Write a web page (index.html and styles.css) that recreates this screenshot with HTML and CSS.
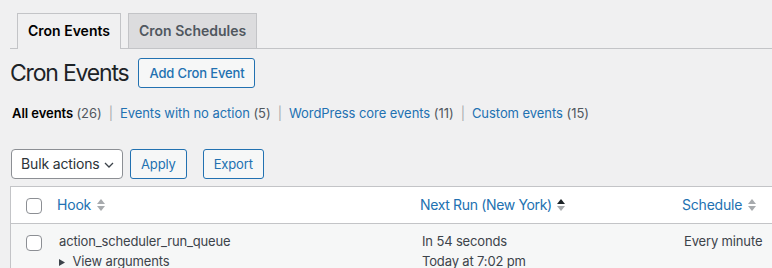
FILE: index.html
```html
<!DOCTYPE html>
<html lang="en">
<head>
<meta charset="utf-8">
<title>Cron Events</title>
<link rel="stylesheet" href="styles.css">
</head>
<body>
<div class="wrap">
  <nav class="tabs">
    <a class="tab active" href="#">Cron Events</a>
    <a class="tab" href="#">Cron Schedules</a>
  </nav>
  <div class="title-row">
    <h1>Cron Events</h1>
    <a class="btn title-btn" href="#">Add Cron Event</a>
  </div>
  <ul class="subsubsub">
    <li><a class="current" href="#">All events <span class="count">(26)</span></a><span class="sep">|</span></li>
    <li><a href="#">Events with no action <span class="count">(5)</span></a><span class="sep">|</span></li>
    <li><a href="#">WordPress core events <span class="count">(11)</span></a><span class="sep">|</span></li>
    <li><a href="#">Custom events <span class="count">(15)</span></a></li>
  </ul>
  <div class="tablenav">
    <div class="select">Bulk actions
      <svg class="chev" width="10" height="6" viewBox="0 0 10 6"><path d="M1 1l4 4 4-4" fill="none" stroke="#3c434a" stroke-width="1.3"/></svg>
    </div>
    <a class="btn" href="#">Apply</a>
    <a class="btn export" href="#">Export</a>
  </div>
  <table class="list">
    <colgroup>
      <col class="c-check"><col class="c-hook"><col class="c-next"><col class="c-sched">
    </colgroup>
    <thead>
      <tr>
        <th class="check"><span class="cb"></span></th>
        <th><a href="#">Hook <svg class="sort" width="8" height="14" viewBox="0 0 8 14"><polygon points="0,6 4,1 8,6" fill="#a7aaad"/><polygon points="0,8 8,8 4,13" fill="#a7aaad"/></svg></a></th>
        <th><a class="tight" href="#">Next Run (New York) <svg class="sort" width="8" height="14" viewBox="0 0 8 14"><polygon points="0,6 4,1 8,6" fill="#1d2327"/><polygon points="0,8 8,8 4,13" fill="#a7aaad"/></svg></a></th>
        <th><a href="#">Schedule <svg class="sort" width="8" height="14" viewBox="0 0 8 14"><polygon points="0,6 4,1 8,6" fill="#a7aaad"/><polygon points="0,8 8,8 4,13" fill="#a7aaad"/></svg></a></th>
      </tr>
    </thead>
    <tbody>
      <tr>
        <th class="check"><span class="cb"></span></th>
        <td>action_scheduler_run_queue<br><span class="args"><svg width="6" height="7" viewBox="0 0 6 7"><polygon points="0,0 6,3.5 0,7" fill="#3c434a"/></svg> View arguments</span></td>
        <td>In 54 seconds<br>Today at 7:02 pm</td>
        <td>Every minute</td>
      </tr>
    </tbody>
  </table>
</div>
</body>
</html>
```

FILE: styles.css
```css
* { box-sizing: border-box; }
html, body { margin: 0; padding: 0; }
body {
  background: #f0f0f1;
  font-family: Inter, "Noto Sans", sans-serif;
  font-size: 13px;
  letter-spacing: -0.15px;
  color: #3c434a;
  width: 772px;
  height: 268px;
  overflow: hidden;
}
a { text-decoration: none; color: #2271b1; }
.wrap { padding-left: 10px; overflow: hidden; }

.tabs {
  display: flex;
  align-items: flex-end;
  gap: 7px;
  padding: 13px 0 0 7px;
  border-bottom: 1px solid #c3c4c7;
}
.tab {
  display: block;
  padding: 5px 10px;
  font-size: 14px;
  line-height: 24px;
  font-weight: 600;
  letter-spacing: 0;
  border: 1px solid #c3c4c7;
  border-bottom: none;
  background: #dcdcde;
  color: #50575e;
  height: 35px;
}
.tab.active {
  background: #f0f0f1;
  color: #000;
  height: 36px;
  margin-bottom: -1px;
}

.title-row { display: flex; align-items: flex-start; }
h1 {
  margin: 0 10px 0 0;
  padding: 9px 0 4px;
  font-size: 23px;
  line-height: 30px;
  font-weight: 400;
  letter-spacing: -1.2px;
  color: #1d2327;
}
.btn {
  display: inline-flex;
  align-items: center;
  height: 30px;
  padding: 0 10px;
  border: 1px solid #2271b1;
  border-radius: 3px;
  background: #f6f7f7;
  color: #2271b1;
  font-size: 13px;
}
.title-btn { margin-top: 9px; padding: 0 10px; font-weight: 500; }

.subsubsub {
  list-style: none;
  margin: 8px 0 0;
  padding: 0 0 0 2px;
  display: flex;
  font-size: 13px;
  line-height: 26px;
  letter-spacing: -0.05px;
}
.subsubsub .current { color: #000; font-weight: 600; }
.count { color: #50575e; font-weight: 400; }
.sep { color: #a7aaad; padding: 0 7px 0 7px; }

.tablenav {
  display: flex;
  margin-top: 23px;
  height: 30px;
  padding-left: 1px;
}
.select {
  position: relative;
  width: 112px;
  height: 30px;
  border: 1px solid #8c8f94;
  border-radius: 4px;
  background: #fff;
  font-size: 14px;
  line-height: 28px;
  padding-left: 9px;
  color: #2c3338;
}
.chev { position: absolute; right: 8px; top: 12px; }
.tablenav .btn { margin-left: 7px; }
.tablenav .export { margin-left: 16px; }

.list {
  margin-top: 7px;
  width: 762px;
  border: 1px solid #c3c4c7;
  border-right: none;
  border-spacing: 0;
  table-layout: fixed;
  background: #fff;
}
.c-check { width: 38px; }
.c-hook { width: 363px; }
.c-next { width: 262px; }
.c-sched { width: 98px; }
thead th {
  text-align: left;
  font-weight: 400;
  font-size: 14px;
  line-height: 20px;
  padding: 0;
  border-bottom: 1px solid #c3c4c7;
  height: 37px;
  vertical-align: top;
  white-space: nowrap;
}
thead th a { display: inline-flex; align-items: center; padding: 8px; gap: 6px; letter-spacing: -0.2px; }
thead th a.tight { letter-spacing: -0.35px; gap: 5px; }
.sort { display: block; }
th.check { padding: 11px 0 0 15px; vertical-align: top; }
.cb {
  display: block;
  width: 16px;
  height: 16px;
  border: 1px solid #8c8f94;
  border-radius: 4px;
  background: #fff;
}
tbody tr { background: #f6f7f7; }
tbody td {
  padding: 8px 10px;
  line-height: 19.5px;
  vertical-align: top;
  font-size: 13px;
  color: #3c434a;
  white-space: nowrap;
}
.args svg { margin-right: 4px; }
```
